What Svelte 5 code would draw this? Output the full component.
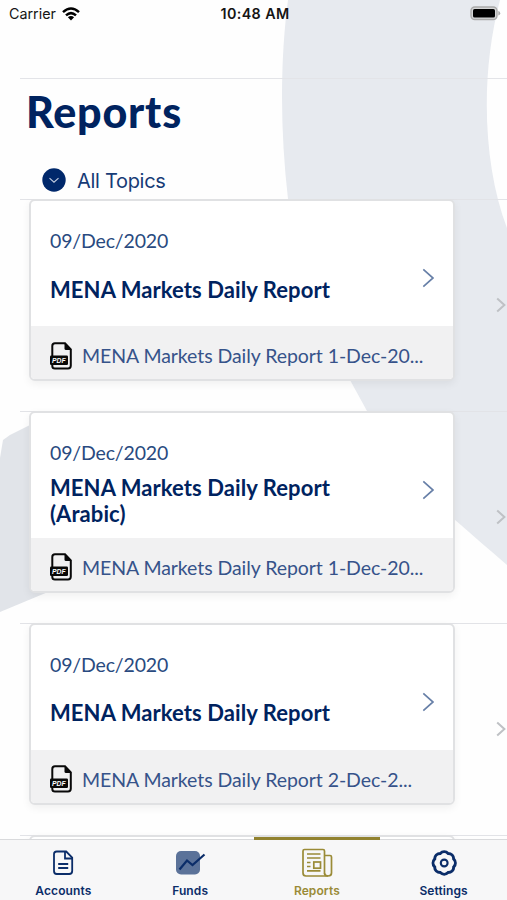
<script>
	let activeTab = $state('Reports');

	const tabs = ['Accounts', 'Funds', 'Reports', 'Settings'];

	const reports = [
		{
			date: '09/Dec/2020',
			title: 'MENA Markets Daily Report',
			file: 'MENA Markets Daily Report 1-Dec-20...'
		},
		{
			date: '09/Dec/2020',
			title: 'MENA Markets Daily Report (Arabic)',
			file: 'MENA Markets Daily Report 1-Dec-20...'
		},
		{
			date: '09/Dec/2020',
			title: 'MENA Markets Daily Report',
			file: 'MENA Markets Daily Report 2-Dec-2...'
		}
	];

	// scalloped edge of the settings gear
	function gearPath(cx, cy, r, teeth) {
		let d = '';
		for (let i = 0; i <= teeth; i++) {
			const a = ((i + 0.5) * 2 * Math.PI) / teeth;
			const x = (cx + r * Math.cos(a)).toFixed(2);
			const y = (cy + r * Math.sin(a)).toFixed(2);
			d += i === 0 ? `M${x} ${y}` : `A5.6 5.6 0 0 1 ${x} ${y}`;
		}
		return d + 'Z';
	}
</script>

<div class="screen">
	<svg class="backdrop" viewBox="0 0 507 900" aria-hidden="true">
		<path
			d="M288 0C280 60 280 130 288 199C300 270 325 325 350 380L367 411C395 460 425 493 454 519C472 535 490 550 507 565V228C483 165 480 75 500 0Z"
			fill="#e7eaef"
		/>
		<path d="M0 458L3 440L10 435L30 425L60 415V586L48 592L0 612Z" fill="#e1e4e9" />
	</svg>

	<div class="status">
		<div class="carrier">
			<span>Carrier</span>
			<svg width="18" height="14" viewBox="0 0 18 14">
				<g fill="none" stroke="#000" stroke-width="2.5">
					<path d="M1 5.1Q9-2.1 17 5.1" />
					<path d="M4 8.4Q9 3.8 14 8.4" />
				</g>
				<path d="M9 13.5L5.9 10.3Q9 7.8 12.1 10.3Z" />
			</svg>
		</div>
		<span class="time">10:48 AM</span>
		<svg class="battery" width="31" height="15" viewBox="0 0 31 15">
			<rect x="1" y="1" width="26" height="12.5" rx="3.8" fill="#d5d6d7" stroke="#aaa" stroke-width="1.4" />
			<rect x="3" y="3" width="22" height="8.6" rx="1.6" />
			<path d="M28.3 5Q30.2 5.2 30.2 7.2T28.3 9.5Z" fill="#aaa" />
		</svg>
	</div>

	<header>
		<h1>Reports</h1>
		<button class="topics">
			<svg width="24" height="24" viewBox="0 0 24 24">
				<circle cx="12" cy="12" r="11.7" fill="#00286b" />
				<path d="M7.5 10.2L12 14.2L16.5 10.2" fill="none" stroke="#c6d0e2" stroke-width="1.1" />
			</svg>
			<span>All Topics</span>
		</button>
	</header>

	<main>
		{#each reports as report}
			<div class="row">
				<article class="card">
					<div class="card-body">
						<div class="card-text">
							<span class="date">{report.date}</span>
							<h2>{report.title}</h2>
						</div>
						<svg class="chevron" width="13" height="20" viewBox="0 0 13 20">
							<path d="M1.3 1.3L11 10L1.3 18.7" fill="none" stroke="#6880a8" stroke-width="1.7" />
						</svg>
					</div>
					<div class="card-file">
						<svg width="23" height="28" viewBox="0 0 23 28">
							<path d="M2.3 15V4Q2.3 1.3 5 1.3H15L20.8 7.3V23.5Q20.8 26.5 18 26.5H5Q2.3 26.5 2.3 24V22" fill="none" stroke="#090909" stroke-width="2" />
							<path d="M14.5 1L21.5 8H16Q14.5 8 14.5 6.5Z" fill="#090909" />
							<rect x="0" y="13.5" width="18" height="9.5" rx="1.2" fill="#090909" />
							<text x="2" y="20.8">PDF</text>
						</svg>
						<span>{report.file}</span>
					</div>
				</article>
				<svg class="disclosure" width="10" height="16" viewBox="0 0 10 16">
					<path d="M1.2 1.4L8.4 8L1.2 14.6" fill="none" stroke="#bfc1c5" stroke-width="2" />
				</svg>
			</div>
		{/each}
		<div class="row">
			<article class="card"></article>
		</div>
	</main>

	<nav>
		{#each tabs as tab}
			<button class="tab" class:active={activeTab === tab} onclick={() => (activeTab = tab)}>
				<svg width="32" height="30" viewBox="0 0 32 30" fill="none" stroke="currentColor">
					{#if tab === 'Accounts'}
						<g stroke-width="1.8">
							<path d="M9.7 3.5H19.2L25.2 9.5V23Q25.2 26 22.2 26H9.7Q7 26 7 23V6.2Q7 3.5 9.7 3.5Z" />
							<path d="M18 3.5V10.5H25" />
							<path d="M11.2 16H21.2M11.2 20H21.2" />
						</g>
					{:else if tab === 'Funds'}
						<rect x="2" y="3" width="24" height="23.5" rx="5" fill="#5b7299" stroke="none" />
						<path d="M5.5 21.5L13 12.5L18.5 17L30.5 6.5" stroke-width="2.2" />
					{:else if tab === 'Reports'}
						<g stroke-width="1.7">
							<path d="M23.5 25.5V3Q23.5 1.5 22 1.5H3.5Q2 1.5 2 3V25Q2 28 5 28H27" />
							<path d="M23.5 7.5H29Q30.5 7.5 30.5 9V25Q30.5 28 27 28Q23.5 28 23.5 25" />
							<path d="M6 6H19.5M6 10H19.5M6 14.5H9.5M6 18.5H9.5M6 22.8H19.5" />
							<rect x="12.8" y="14" width="6.7" height="6.2" />
						</g>
					{:else}
						<path d={gearPath(16.2, 15, 10.3, 8)} stroke-width="3" />
						<circle cx="16.2" cy="15" r="3.4" stroke-width="2.1" />
					{/if}
				</svg>
				<span>{tab}</span>
			</button>
		{/each}
	</nav>
</div>

<style>
	:global(body) {
		margin: 0;
		background: #fff;
	}

	.screen {
		position: relative;
		display: flex;
		flex-direction: column;
		width: 507px;
		height: 900px;
		overflow: hidden;
		background: #fefefe;
		color: #00235f;
		font-family: Lato, sans-serif;
	}

	.screen > * {
		flex-shrink: 0;
	}

	svg {
		display: block;
		flex-shrink: 0;
	}

	button {
		border: 0;
		padding: 0;
		background: none;
		color: inherit;
	}

	.backdrop {
		position: absolute;
		inset: 0;
		width: 507px;
		height: 900px;
	}

	.status,
	header,
	main,
	nav {
		position: relative;
		box-sizing: border-box;
	}

	.status {
		display: grid;
		grid-template-columns: 1fr auto 1fr;
		align-items: center;
		height: 78px;
		padding: 0 6px 51px 9px;
		color: #151515;
		font: 14.3px Inter, sans-serif;
	}

	.carrier {
		display: flex;
		align-items: center;
		gap: 6px;
	}

	.time {
		font-weight: 600;
		letter-spacing: 0.4px;
	}

	.battery {
		justify-self: end;
	}

	header {
		height: 121px;
		margin-left: 20px;
		padding: 10px 0 0 6px;
		border-top: 1px solid #e3e4e8;
	}

	h1 {
		margin: 0;
		font-size: 43px;
		line-height: 46px;
		font-weight: 900;
		letter-spacing: 0.8px;
	}

	.topics {
		display: flex;
		align-items: center;
		gap: 11px;
		height: 26px;
		margin: 32px 0 0 16px;
		font: 20px Inter, sans-serif;
		letter-spacing: -0.3px;
		color: #173b76;
	}

	.topics span {
		padding-top: 2px;
	}

	main {
		flex: 0 0 641px;
		overflow: hidden;
	}

	.row {
		display: flex;
		align-items: flex-start;
		justify-content: space-between;
		box-sizing: border-box;
		height: 211.9px;
		margin-left: 20px;
		padding-left: 9px;
		border-top: 1px solid #e2e3e7;
	}

	.card {
		box-sizing: border-box;
		width: 426px;
		height: 182px;
		margin-top: -1px;
		border: 2px solid #e0e1e3;
		border-radius: 6px;
		background: #fff;
		box-shadow: 0 3px 9px rgba(0, 0, 0, 0.06);
		overflow: hidden;
	}

	.card-body {
		display: flex;
		justify-content: space-between;
		box-sizing: border-box;
		height: 125px;
		padding: 27px 18px 0 19px;
	}

	.card-text {
		display: flex;
		flex-direction: column;
		width: 310px;
		height: 97px;
	}

	.date {
		font-size: 19.5px;
		line-height: 26px;
		letter-spacing: -0.15px;
		color: #294a80;
	}

	h2 {
		display: flex;
		align-items: center;
		flex: 1;
		margin: 0;
		font-size: 22px;
		line-height: 26px;
		font-weight: 700;
		letter-spacing: 0.08px;
	}

	.chevron {
		margin-top: 40px;
	}

	.card-file {
		display: flex;
		align-items: center;
		gap: 9px;
		height: 53px;
		padding: 6px 0 0 19px;
		box-sizing: border-box;
		background: #f1f1f2;
		color: #36538a;
		font-size: 19.5px;
		letter-spacing: -0.07px;
		white-space: nowrap;
	}

	.card-file text {
		font: italic bold 6.8px 'Liberation Sans', sans-serif;
		letter-spacing: 0;
		fill: #fff;
	}

	.disclosure {
		margin: 97px 1px 0 0;
	}

	nav {
		display: grid;
		grid-template-columns: repeat(4, 1fr);
		height: 61px;
		margin-top: -1px;
		border-top: 1px solid #d9dadc;
		background: #f7f7f8;
	}

	.tab {
		position: relative;
		display: flex;
		flex-direction: column;
		align-items: center;
		padding-top: 8px;
		gap: 5px;
		color: #0b2d69;
		font: 600 12px/16px Inter, sans-serif;
		letter-spacing: 0.1px;
	}

	.tab.active {
		color: #9a8b37;
	}

	.tab.active::before {
		content: '';
		position: absolute;
		top: -3px;
		left: 0;
		right: 0;
		height: 3px;
		background: #91822f;
	}
</style>
